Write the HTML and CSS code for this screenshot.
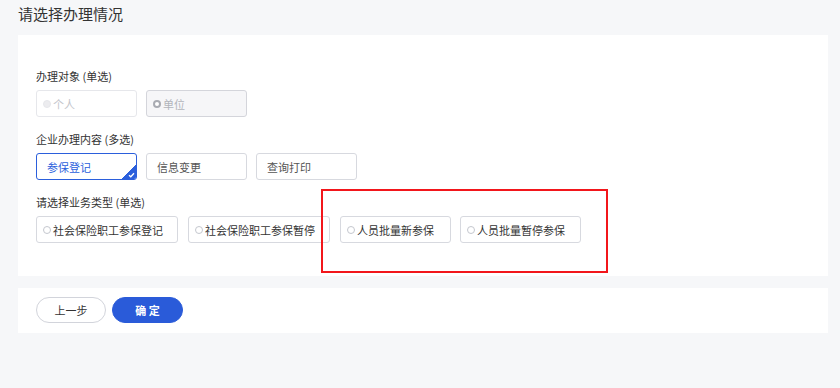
FILE: index.html
```html
<!DOCTYPE html>
<html lang="zh-CN">

<head>
    <meta charset="UTF-8">
    <meta name="viewport" content="width=device-width, initial-scale=1.0">
    <title>请选择办理情况</title>
    <link rel="stylesheet" href="styles.css">
</head>

<body>
    <div class="page">
        <h1 class="title">请选择办理情况</h1>

        <div class="card">
            <div class="group">
                <div class="label">办理对象 (单选)</div>
                <div class="options">
                    <div class="opt opt-w101 disabled"><span class="radio"></span>个人</div>
                    <div class="opt opt-w101 disabled checked"><span class="radio"></span>单位</div>
                </div>
            </div>

            <div class="group">
                <div class="label">企业办理内容 (多选)</div>
                <div class="options">
                    <div class="opt opt-w101 active plain">参保登记<span class="corner"><svg width="7" height="6" viewBox="0 0 7 6"><path d="M1 3.2 L2.8 4.8 L6 1.2" fill="none" stroke="#fff" stroke-width="1.3"/></svg></span></div>
                    <div class="opt opt-w101 plain">信息变更</div>
                    <div class="opt opt-w101 plain">查询打印</div>
                </div>
            </div>

            <div class="group group-last">
                <div class="label">请选择业务类型 (单选)</div>
                <div class="options wide">
                    <div class="opt opt-w142"><span class="radio"></span>社会保险职工参保登记</div>
                    <div class="opt opt-w142"><span class="radio"></span>社会保险职工参保暂停</div>
                    <div class="opt opt-w111"><span class="radio"></span>人员批量新参保</div>
                    <div class="opt opt-w121"><span class="radio"></span>人员批量暂停参保</div>
                </div>
            </div>

            <!-- 标注框 -->
            <div class="mark"></div>
        </div>

        <div class="card footer">
            <button class="btn btn-prev">上一步</button>
            <button class="btn btn-ok">确 定</button>
        </div>
    </div>
</body>

</html>
```

FILE: styles.css
```css
body {
    margin: 0;
    background-color: #f6f7f9;
    font-family: "Noto Sans CJK SC", "Liberation Sans", sans-serif;
    color: #333;
}

.page {
    padding: 0 12px 0 18px;
}

.title {
    margin: 0 0 8px;
    font-size: 15px;
    font-weight: 400;
    line-height: 27px;
    color: #333;
}

.card {
    position: relative;
    background-color: #fff;
    padding: 33px 18px 33px;
}

.group {
    margin-bottom: 14px;
}

.group-last {
    margin-bottom: 0;
}

.label {
    font-size: 11px;
    line-height: 16px;
    margin-bottom: 6px;
    color: #333;
}

.options {
    display: flex;
    gap: 9px;
}

.options.wide {
    gap: 10px;
}

.opt {
    position: relative;
    box-sizing: border-box;
    height: 27px;
    display: flex;
    align-items: center;
    padding-left: 6px;
    border: 1px solid #d7d9df;
    border-radius: 3px;
    font-size: 11px;
    color: #333;
    background-color: #fff;
}

.opt.plain {
    padding-left: 10px;
    color: #555;
}

.opt-w101 { width: 101px; }
.opt-w111 { width: 111px; margin-right: -1px; }
.opt-w121 { width: 121px; }
.opt-w142 { width: 142px; }

.radio {
    box-sizing: border-box;
    width: 8px;
    height: 8px;
    border: 1px solid #c4c7ce;
    border-radius: 50%;
    margin-right: 2px;
    background-color: #fff;
}

.opt.disabled {
    color: #c3c5cb;
    border-color: #e6e7eb;
}

.opt.disabled .radio {
    background-color: #ececef;
    border-color: #e6e7eb;
}

.opt.disabled.checked {
    background-color: #f6f6f8;
    border-color: #d4d5db;
    color: #b2b4bb;
}

.opt.disabled.checked .radio {
    background-color: #fff;
    border: 2.5px solid #a9abb2;
}

.opt.active {
    border-color: #2b5fdc;
    color: #2b5fdc;
}

.corner {
    position: absolute;
    right: 0;
    bottom: 0;
    width: 14px;
    height: 14px;
    background: linear-gradient(135deg, transparent 50%, #2b5fdc 50%);
    border-bottom-right-radius: 2px;
}

.corner svg {
    position: absolute;
    right: 1px;
    bottom: 1px;
}

.mark {
    position: absolute;
    left: 303px;
    top: 154px;
    width: 283px;
    height: 80px;
    border: 2px solid #f2161b;
}

.footer {
    margin-top: 12px;
    padding: 9px 18px 10px;
    display: flex;
    gap: 6px;
}

.btn {
    box-sizing: border-box;
    height: 26px;
    border-radius: 13px;
    font-family: "Noto Sans CJK SC", "Liberation Sans", sans-serif;
    font-size: 11px;
    cursor: pointer;
    padding: 0;
}

.btn-prev {
    width: 70px;
    background-color: #fff;
    border: 1px solid #d2d4db;
    color: #333;
}

.btn-ok {
    width: 71px;
    background-color: #2a5bd9;
    border: 1px solid #2a5bd9;
    color: #fff;
    font-weight: 700;
}
```
